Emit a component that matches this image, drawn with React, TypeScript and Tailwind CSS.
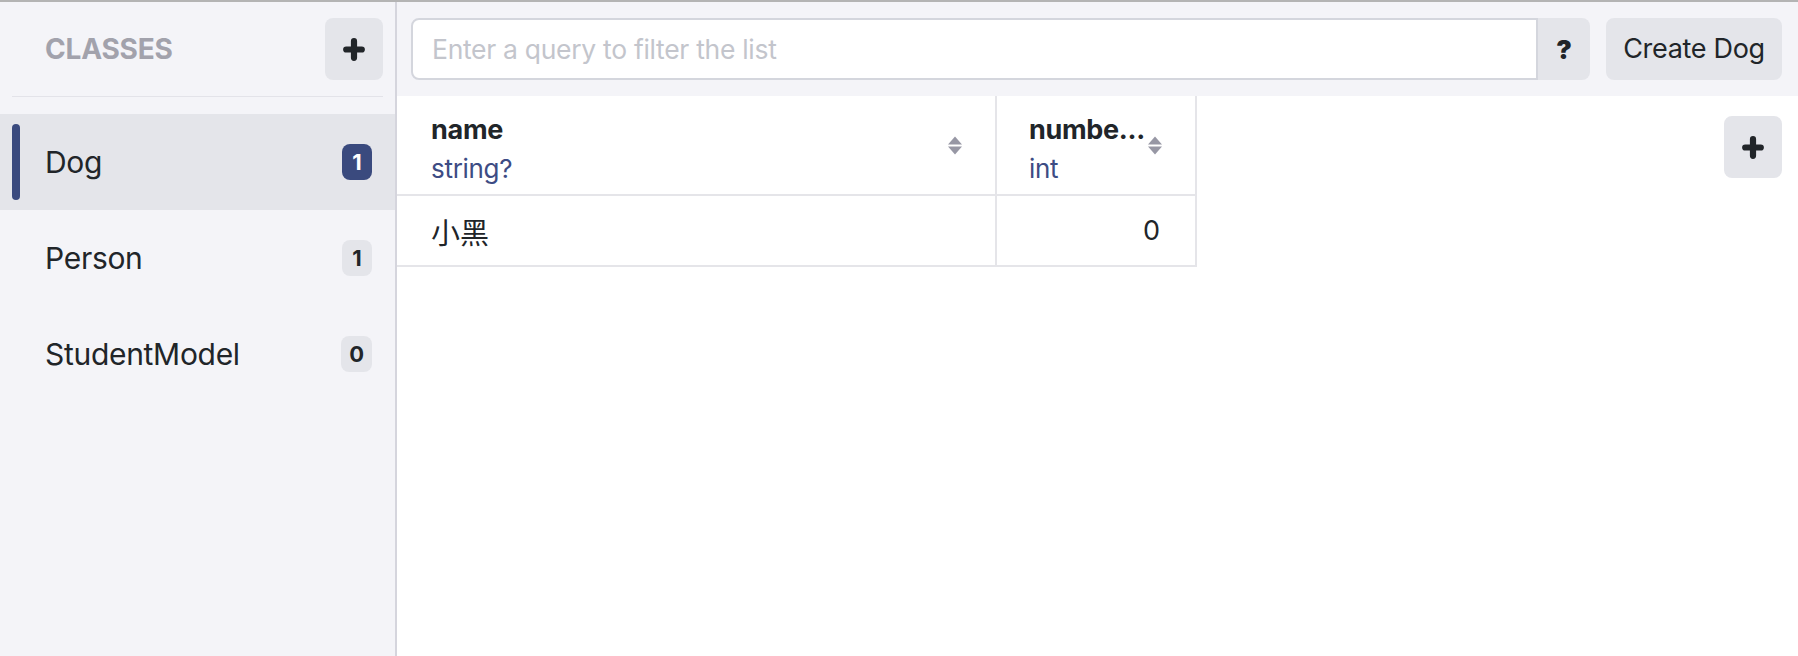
import React from "react";

type ClassItem = {
  name: string;
  count: number;
};

const classes: ClassItem[] = [
  { name: "Dog", count: 1 },
  { name: "Person", count: 1 },
  { name: "StudentModel", count: 0 },
];

const PlusIcon = () => (
  <svg width="22" height="23" viewBox="0 0 22 23" fill="none">
    <path
      d="M11 3.2v16.6M3.2 11.5h15.6"
      stroke="#212529"
      strokeWidth="6.2"
      strokeLinecap="round"
    />
  </svg>
);

const SortIcon = () => (
  <svg width="14" height="19" viewBox="0 0 14 19" className="shrink-0">
    <path d="M7 0.5L14 8.5H0Z" fill="#9797a4" />
    <path d="M0 10.5H14L7 18.5Z" fill="#9797a4" />
  </svg>
);

const Sidebar = () => {
  const selected = "Dog";
  return (
    <aside className="w-[397px] shrink-0 bg-[#f4f4f8] border-r-2 border-[#d5d5dd] flex flex-col">
      <div className="mx-[12px] h-[95px] flex items-center justify-between pl-[33px] border-b border-[#e3e3e9]">
        <span className="text-[28px] font-bold tracking-[-0.2px] text-[#a2a2ac] uppercase">
          Classes
        </span>
        <button className="w-[58px] h-[62px] rounded-[8px] bg-[#e4e5ea] flex items-center justify-center">
          <PlusIcon />
        </button>
      </div>
      <ul className="mt-[17px] flex flex-col">
        {classes.map((c) => {
          const active = c.name === selected;
          return (
            <li
              key={c.name}
              className={`relative h-[96px] flex items-center justify-between pl-[45px] pr-[23px] ${
                active ? "bg-[#e4e5ea]" : ""
              }`}
            >
              {active && (
                <span className="absolute left-[12px] top-[10px] bottom-[10px] w-[8px] rounded-full bg-[#3a4a7e]" />
              )}
              <span className="text-[30px] text-[#212529] tracking-[-0.3px]">{c.name}</span>
              <span
                className={`h-[36px] min-w-[30px] px-[8px] rounded-[8px] flex items-center justify-center text-[22px] font-bold ${
                  active ? "bg-[#3a4a7e] text-white" : "bg-[#e4e5ea] text-[#212529]"
                }`}
              >
                {c.count}
              </span>
            </li>
          );
        })}
      </ul>
    </aside>
  );
};

const Toolbar = () => (
  <div className="h-[94px] shrink-0 bg-[#f4f4f8] flex items-center pl-[14px] pr-[16px] gap-[16px]">
    <div className="flex-1 flex h-[62px]">
      <input
        className="flex-1 h-full rounded-l-[8px] border-2 border-[#d4d6dd] bg-white px-[19px] text-[26.5px] text-[#212529] placeholder:text-[#c3c5cc] outline-none tracking-[-0.3px]"
        placeholder="Enter a query to filter the list"
      />
      <button className="w-[52px] h-full rounded-r-[8px] bg-[#e4e5ea] text-[26px] font-black text-[#212529]">
        ?
      </button>
    </div>
    <button className="w-[176px] h-[62px] rounded-[8px] bg-[#e4e5ea] text-[27px] text-[#212529] tracking-[-0.3px]">
      Create Dog
    </button>
  </div>
);

const DogTable = () => (
  <div className="w-[800px] text-[#212529]">
    <div className="grid grid-cols-[600px_200px] border-b-2 border-[#e5e5e9]">
      <div className="h-[98px] flex items-center justify-between pl-[34px] pr-[33px] border-r-2 border-[#e5e5e9]">
        <div className="flex flex-col leading-[39px] pt-[7px]">
          <span className="text-[27px] font-bold tracking-[-0.3px]">name</span>
          <span className="text-[26px] text-[#3d4c84] tracking-[-0.3px]">string?</span>
        </div>
        <SortIcon />
      </div>
      <div className="h-[98px] flex items-center justify-between pl-[32px] pr-[33px] border-r-2 border-[#e5e5e9]">
        <div className="flex flex-col leading-[39px] pt-[7px] min-w-0">
          <span className="text-[27px] font-bold tracking-[-0.3px] whitespace-nowrap">numbe...</span>
          <span className="text-[26px] text-[#3d4c84] tracking-[-0.3px]">int</span>
        </div>
        <SortIcon />
      </div>
    </div>
    <div className="grid grid-cols-[600px_200px] border-b-2 border-[#e5e5e9]">
      <div className="h-[69px] flex items-center pl-[34px] pt-[2px] border-r-2 border-[#e5e5e9] text-[29px] font-['Noto_Sans_CJK_SC',sans-serif]">
        小黑
      </div>
      <div className="h-[69px] flex items-center justify-end pr-[35px] pt-[2px] border-r-2 border-[#e5e5e9] text-[27px]">
        0
      </div>
    </div>
  </div>
);

export default function App() {
  return (
    <div className="h-screen w-full flex border-t-2 border-[#b4b4b4] bg-white font-['Inter','Liberation_Sans',sans-serif] overflow-hidden">
      <Sidebar />
      <main className="flex-1 flex flex-col min-w-0">
        <Toolbar />
        <div className="flex-1 flex justify-between">
          <DogTable />
          <div className="pt-[20px] pr-[16px]">
            <button className="w-[58px] h-[62px] rounded-[8px] bg-[#e4e5ea] flex items-center justify-center">
              <PlusIcon />
            </button>
          </div>
        </div>
      </main>
    </div>
  );
}
